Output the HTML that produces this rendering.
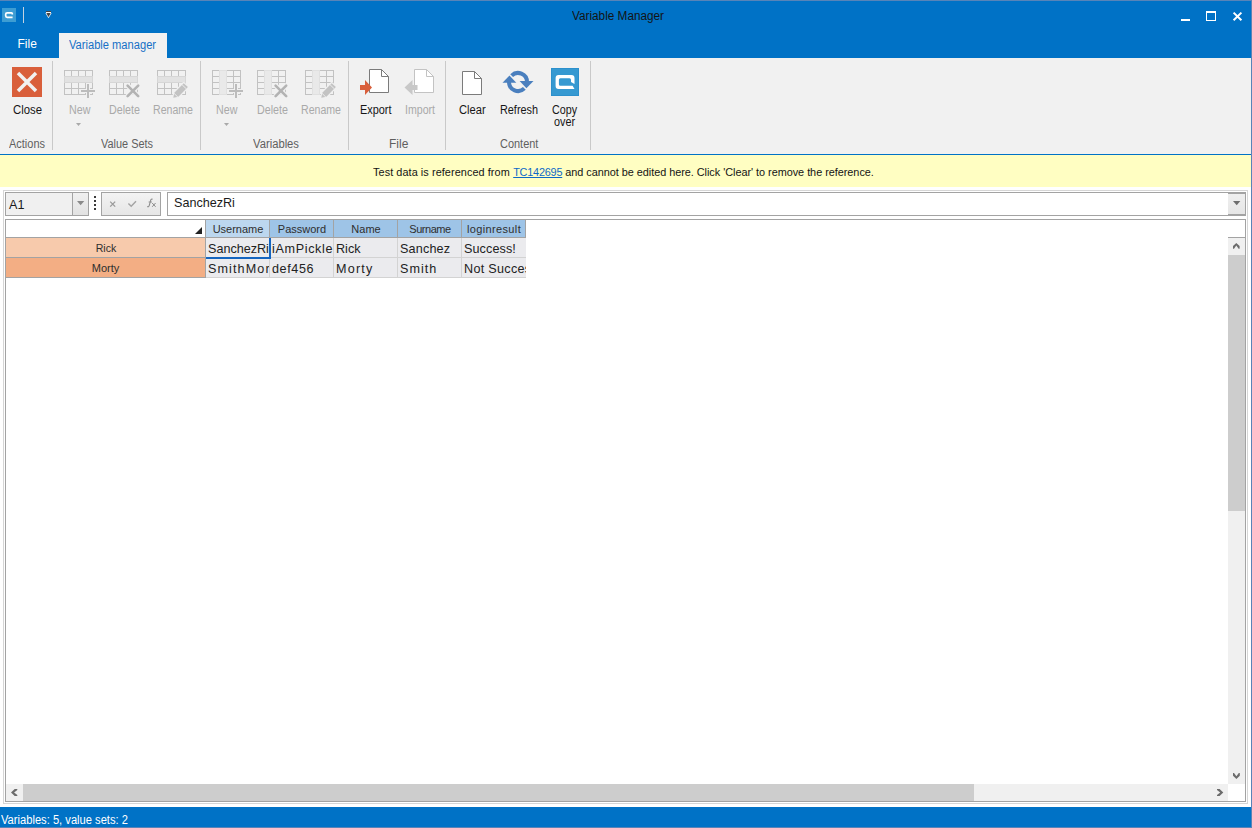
<!DOCTYPE html>
<html><head><meta charset="utf-8"><title>Variable Manager</title>
<style>
html,body{margin:0;padding:0;width:1252px;height:828px;overflow:hidden;background:#fff}
body{position:relative;font-family:"Liberation Sans", sans-serif}
div{box-sizing:content-box}
</style></head><body>
<div style="position:absolute;left:0px;top:0px;width:1252px;height:828px;background:#ffffff;"></div>
<div style="position:absolute;left:0px;top:0px;width:1252px;height:58px;background:#0072c6;"></div>
<div style="position:absolute;left:0px;top:0px;width:1252px;height:1px;background:#5884b8;"></div>
<svg style="position:absolute;left:2px;top:8px" width="14" height="14" viewBox="0 0 14 14"><rect width="14" height="14" fill="#3d9dd3"/><path d="M10.3 6.6 V5.6 Q10.3 4.8 9.5 4.8 H5.2 Q3.7 4.8 3.7 6.3 V7.8 Q3.7 9.3 5.2 9.3 H10.6" fill="none" stroke="#fff" stroke-width="1.7"/></svg>
<div style="position:absolute;left:23px;top:7px;width:1px;height:16px;background:#c3d2e0;"></div>
<svg style="position:absolute;left:44px;top:10px" width="9" height="10" viewBox="0 0 9 10"><rect x="2" y="1" width="5" height="1" fill="#444"/><rect x="2" y="2" width="5" height="1" fill="#f2f6fa"/><path d="M1.4 3 H7.6 L4.5 8.3 Z" fill="#f2f6fa"/><path d="M2.3 3 H6.7 L4.5 6.9 Z" fill="#444"/></svg>
<div style="position:absolute;left:572px;top:9.84px;font-size:12px;line-height:12px;color:#141414;white-space:pre;transform:scaleX(0.9808);transform-origin:0 0;">Variable Manager</div>
<div style="position:absolute;left:1181px;top:19px;width:9px;height:2px;background:#ffffff;"></div>
<div style="position:absolute;left:1206px;top:11px;width:8px;height:7px;border:1px solid #fff;border-top-width:2px"></div>
<svg style="position:absolute;left:1232px;top:11px" width="11" height="11" viewBox="0 0 11 11"><path d="M1.6 1.6 L9.4 9.3 M9.4 1.6 L1.6 9.3" stroke="#fff" stroke-width="2"/></svg>
<div style="position:absolute;left:17.5px;top:37.84px;font-size:12px;line-height:12px;color:#ffffff;white-space:pre;">File</div>
<div style="position:absolute;left:59px;top:33px;width:108px;height:25px;background:#f1f1f1;"></div>
<div style="position:absolute;left:69px;top:38.84px;font-size:12px;line-height:12px;color:#1570c6;white-space:pre;transform:scaleX(0.9275);transform-origin:0 0;">Variable manager</div>
<div style="position:absolute;left:0px;top:58px;width:1251px;height:96px;background:#f1f1f1;"></div>
<div style="position:absolute;left:0px;top:154px;width:1251px;height:1px;background:#0072c6;"></div>
<div style="position:absolute;left:52px;top:61px;width:1px;height:89px;background:#c9c9c9;"></div>
<div style="position:absolute;left:200px;top:61px;width:1px;height:89px;background:#c9c9c9;"></div>
<div style="position:absolute;left:348px;top:61px;width:1px;height:89px;background:#c9c9c9;"></div>
<div style="position:absolute;left:445px;top:61px;width:1px;height:89px;background:#c9c9c9;"></div>
<div style="position:absolute;left:590px;top:61px;width:1px;height:89px;background:#c9c9c9;"></div>
<svg style="position:absolute;left:12px;top:67px" width="30" height="30" viewBox="0 0 30 30"><rect width="30" height="30" fill="#d95f3b"/><path d="M6 6 L24 24 M24 6 L6 24" stroke="#f1f1f1" stroke-width="3.5"/></svg>
<div style="position:absolute;left:13px;top:103.84px;font-size:12px;line-height:12px;color:#161616;white-space:pre;transform:scaleX(0.9450);transform-origin:0 0;">Close</div>
<div style="position:absolute;left:9px;top:137.84px;font-size:12px;line-height:12px;color:#5f5f5f;white-space:pre;transform:scaleX(0.9150);transform-origin:0 0;">Actions</div>
<svg style="position:absolute;left:64px;top:70px" width="34" height="30" viewBox="0 0 34 30"><rect x="0" y="0" width="1" height="25" fill="#c2c2c2"/><rect x="7" y="0" width="1" height="6" fill="#c2c2c2"/><rect x="7" y="12" width="1" height="13" fill="#c2c2c2"/><rect x="14" y="0" width="1" height="6" fill="#c2c2c2"/><rect x="14" y="12" width="1" height="13" fill="#c2c2c2"/><rect x="21" y="0" width="1" height="6" fill="#c2c2c2"/><rect x="21" y="12" width="1" height="13" fill="#c2c2c2"/><rect x="28" y="0" width="1" height="25" fill="#c2c2c2"/><rect x="0" y="0" width="29" height="1" fill="#c2c2c2"/><rect x="0" y="6" width="29" height="1" fill="#c2c2c2"/><rect x="0" y="12" width="29" height="1" fill="#c2c2c2"/><rect x="0" y="18" width="29" height="1" fill="#c2c2c2"/><rect x="0" y="24" width="29" height="1" fill="#c2c2c2"/><rect x="0" y="6" width="29" height="7" fill="#d6d6d6"/><rect x="1" y="7" width="27" height="5" fill="#e2e2e2"/><rect x="22" y="13" width="4" height="16" fill="#f1f1f1"/><rect x="16" y="19" width="16" height="4" fill="#f1f1f1"/><rect x="23" y="14" width="2" height="14" fill="#bcbcbc"/><rect x="17" y="20" width="14" height="2" fill="#bcbcbc"/></svg>
<div style="position:absolute;left:68.5px;top:103.84px;font-size:12px;line-height:12px;color:#a9a9a9;white-space:pre;transform:scaleX(0.8917);transform-origin:0 0;">New</div>
<svg style="position:absolute;left:76px;top:123px" width="5" height="3" viewBox="0 0 5 3"><path d="M0 0 H5 L2.5 3 Z" fill="#a9a9a9"/></svg>
<svg style="position:absolute;left:109px;top:70px" width="34" height="30" viewBox="0 0 34 30"><rect x="0" y="0" width="1" height="25" fill="#c2c2c2"/><rect x="7" y="0" width="1" height="6" fill="#c2c2c2"/><rect x="7" y="12" width="1" height="13" fill="#c2c2c2"/><rect x="14" y="0" width="1" height="6" fill="#c2c2c2"/><rect x="14" y="12" width="1" height="13" fill="#c2c2c2"/><rect x="21" y="0" width="1" height="6" fill="#c2c2c2"/><rect x="21" y="12" width="1" height="13" fill="#c2c2c2"/><rect x="28" y="0" width="1" height="25" fill="#c2c2c2"/><rect x="0" y="0" width="29" height="1" fill="#c2c2c2"/><rect x="0" y="6" width="29" height="1" fill="#c2c2c2"/><rect x="0" y="12" width="29" height="1" fill="#c2c2c2"/><rect x="0" y="18" width="29" height="1" fill="#c2c2c2"/><rect x="0" y="24" width="29" height="1" fill="#c2c2c2"/><rect x="0" y="6" width="29" height="7" fill="#d6d6d6"/><rect x="1" y="7" width="27" height="5" fill="#e2e2e2"/><path d="M18.6 15.6 L29.2 26.2 M29.2 15.6 L18.6 26.2" stroke="#f1f1f1" stroke-width="5" stroke-linecap="round"/><path d="M18.6 15.6 L29.2 26.2 M29.2 15.6 L18.6 26.2" stroke="#b3b3b3" stroke-width="2.6" stroke-linecap="round"/></svg>
<div style="position:absolute;left:108.8px;top:103.84px;font-size:12px;line-height:12px;color:#a9a9a9;white-space:pre;transform:scaleX(0.8933);transform-origin:0 0;">Delete</div>
<svg style="position:absolute;left:157px;top:70px" width="34" height="30" viewBox="0 0 34 30"><rect x="0" y="0" width="1" height="25" fill="#c2c2c2"/><rect x="7" y="0" width="1" height="6" fill="#c2c2c2"/><rect x="7" y="12" width="1" height="13" fill="#c2c2c2"/><rect x="14" y="0" width="1" height="6" fill="#c2c2c2"/><rect x="14" y="12" width="1" height="13" fill="#c2c2c2"/><rect x="21" y="0" width="1" height="6" fill="#c2c2c2"/><rect x="21" y="12" width="1" height="13" fill="#c2c2c2"/><rect x="28" y="0" width="1" height="25" fill="#c2c2c2"/><rect x="0" y="0" width="29" height="1" fill="#c2c2c2"/><rect x="0" y="6" width="29" height="1" fill="#c2c2c2"/><rect x="0" y="12" width="29" height="1" fill="#c2c2c2"/><rect x="0" y="18" width="29" height="1" fill="#c2c2c2"/><rect x="0" y="24" width="29" height="1" fill="#c2c2c2"/><rect x="0" y="6" width="29" height="7" fill="#d6d6d6"/><rect x="1" y="7" width="27" height="5" fill="#e2e2e2"/><path d="M16.3 27.8 L17.3 22.8 L26.7 13.2 L30.9 17.1 L21.4 26.7 Z" fill="#f1f1f1" stroke="#f1f1f1" stroke-width="2.4" stroke-linejoin="round"/><path d="M16.3 27.8 L17.3 22.8 L26.7 13.2 L30.9 17.1 L21.4 26.7 Z" fill="#c3c3c3"/><path d="M17.0 23.3 L20.9 27.1 M25.1 14.8 L29.2 18.7" stroke="#f1f1f1" stroke-width="0.9"/></svg>
<div style="position:absolute;left:152.6px;top:103.84px;font-size:12px;line-height:12px;color:#a9a9a9;white-space:pre;transform:scaleX(0.8817);transform-origin:0 0;">Rename</div>
<div style="position:absolute;left:101px;top:137.84px;font-size:12px;line-height:12px;color:#5f5f5f;white-space:pre;transform:scaleX(0.9100);transform-origin:0 0;">Value Sets</div>
<svg style="position:absolute;left:212px;top:70px" width="34" height="30" viewBox="0 0 34 30"><rect x="0" y="0" width="1" height="25" fill="#c2c2c2"/><rect x="21" y="0" width="1" height="25" fill="#c2c2c2"/><rect x="28" y="0" width="1" height="25" fill="#c2c2c2"/><rect x="0" y="0" width="29" height="1" fill="#c2c2c2"/><rect x="0" y="6" width="7" height="1" fill="#c2c2c2"/><rect x="14" y="6" width="15" height="1" fill="#c2c2c2"/><rect x="0" y="12" width="7" height="1" fill="#c2c2c2"/><rect x="14" y="12" width="15" height="1" fill="#c2c2c2"/><rect x="0" y="18" width="7" height="1" fill="#c2c2c2"/><rect x="14" y="18" width="15" height="1" fill="#c2c2c2"/><rect x="0" y="24" width="29" height="1" fill="#c2c2c2"/><rect x="7" y="0" width="8" height="25" fill="#e0e0e0"/><rect x="8" y="1" width="6" height="23" fill="#e9e9e9"/><rect x="22" y="13" width="4" height="16" fill="#f1f1f1"/><rect x="16" y="19" width="16" height="4" fill="#f1f1f1"/><rect x="23" y="14" width="2" height="14" fill="#bcbcbc"/><rect x="17" y="20" width="14" height="2" fill="#bcbcbc"/></svg>
<div style="position:absolute;left:216.4px;top:103.84px;font-size:12px;line-height:12px;color:#a9a9a9;white-space:pre;transform:scaleX(0.8917);transform-origin:0 0;">New</div>
<svg style="position:absolute;left:224px;top:123px" width="5" height="3" viewBox="0 0 5 3"><path d="M0 0 H5 L2.5 3 Z" fill="#a9a9a9"/></svg>
<svg style="position:absolute;left:257px;top:70px" width="34" height="30" viewBox="0 0 34 30"><rect x="0" y="0" width="1" height="25" fill="#c2c2c2"/><rect x="21" y="0" width="1" height="25" fill="#c2c2c2"/><rect x="28" y="0" width="1" height="25" fill="#c2c2c2"/><rect x="0" y="0" width="29" height="1" fill="#c2c2c2"/><rect x="0" y="6" width="7" height="1" fill="#c2c2c2"/><rect x="14" y="6" width="15" height="1" fill="#c2c2c2"/><rect x="0" y="12" width="7" height="1" fill="#c2c2c2"/><rect x="14" y="12" width="15" height="1" fill="#c2c2c2"/><rect x="0" y="18" width="7" height="1" fill="#c2c2c2"/><rect x="14" y="18" width="15" height="1" fill="#c2c2c2"/><rect x="0" y="24" width="29" height="1" fill="#c2c2c2"/><rect x="7" y="0" width="8" height="25" fill="#e0e0e0"/><rect x="8" y="1" width="6" height="23" fill="#e9e9e9"/><path d="M18.6 15.6 L29.2 26.2 M29.2 15.6 L18.6 26.2" stroke="#f1f1f1" stroke-width="5" stroke-linecap="round"/><path d="M18.6 15.6 L29.2 26.2 M29.2 15.6 L18.6 26.2" stroke="#b3b3b3" stroke-width="2.6" stroke-linecap="round"/></svg>
<div style="position:absolute;left:256.6px;top:103.84px;font-size:12px;line-height:12px;color:#a9a9a9;white-space:pre;transform:scaleX(0.8933);transform-origin:0 0;">Delete</div>
<svg style="position:absolute;left:305px;top:70px" width="34" height="30" viewBox="0 0 34 30"><rect x="0" y="0" width="1" height="25" fill="#c2c2c2"/><rect x="21" y="0" width="1" height="25" fill="#c2c2c2"/><rect x="28" y="0" width="1" height="25" fill="#c2c2c2"/><rect x="0" y="0" width="29" height="1" fill="#c2c2c2"/><rect x="0" y="6" width="7" height="1" fill="#c2c2c2"/><rect x="14" y="6" width="15" height="1" fill="#c2c2c2"/><rect x="0" y="12" width="7" height="1" fill="#c2c2c2"/><rect x="14" y="12" width="15" height="1" fill="#c2c2c2"/><rect x="0" y="18" width="7" height="1" fill="#c2c2c2"/><rect x="14" y="18" width="15" height="1" fill="#c2c2c2"/><rect x="0" y="24" width="29" height="1" fill="#c2c2c2"/><rect x="7" y="0" width="8" height="25" fill="#e0e0e0"/><rect x="8" y="1" width="6" height="23" fill="#e9e9e9"/><path d="M16.3 27.8 L17.3 22.8 L26.7 13.2 L30.9 17.1 L21.4 26.7 Z" fill="#f1f1f1" stroke="#f1f1f1" stroke-width="2.4" stroke-linejoin="round"/><path d="M16.3 27.8 L17.3 22.8 L26.7 13.2 L30.9 17.1 L21.4 26.7 Z" fill="#c3c3c3"/><path d="M17.0 23.3 L20.9 27.1 M25.1 14.8 L29.2 18.7" stroke="#f1f1f1" stroke-width="0.9"/></svg>
<div style="position:absolute;left:300.5px;top:103.84px;font-size:12px;line-height:12px;color:#a9a9a9;white-space:pre;transform:scaleX(0.8817);transform-origin:0 0;">Rename</div>
<div style="position:absolute;left:253.2px;top:137.84px;font-size:12px;line-height:12px;color:#5f5f5f;white-space:pre;transform:scaleX(0.9358);transform-origin:0 0;">Variables</div>
<svg style="position:absolute;left:358px;top:68px" width="34" height="30" viewBox="0 0 34 30"><path d="M11.5 1.5 H23.5 L30.5 8.5 V24.5 H11.5 Z" fill="#fff" stroke="#7b7b7b" stroke-width="1"/><path d="M23.5 1.5 V8.5 H30.5" fill="none" stroke="#7b7b7b" stroke-width="1"/><path d="M2 17 H7 V12 L14 19.5 L7 27 V22 H2 Z" fill="#d95f3b"/></svg>
<div style="position:absolute;left:359.5px;top:103.84px;font-size:12px;line-height:12px;color:#161616;white-space:pre;transform:scaleX(0.9083);transform-origin:0 0;">Export</div>
<svg style="position:absolute;left:403px;top:68px" width="34" height="30" viewBox="0 0 34 30"><path d="M11.5 1.5 H23.5 L30.5 8.5 V24.5 H11.5 Z" fill="#fff" stroke="#c3c3c3" stroke-width="1"/><path d="M23.5 1.5 V8.5 H30.5" fill="none" stroke="#c3c3c3" stroke-width="1"/><path d="M1.5 19.5 L9.5 12 V17 H14.5 V22 H9.5 V27 Z" fill="#c8c8c8"/></svg>
<div style="position:absolute;left:404.8px;top:103.84px;font-size:12px;line-height:12px;color:#a9a9a9;white-space:pre;transform:scaleX(0.8825);transform-origin:0 0;">Import</div>
<div style="position:absolute;left:389px;top:137.84px;font-size:12px;line-height:12px;color:#5f5f5f;white-space:pre;">File</div>
<svg style="position:absolute;left:461px;top:70px" width="22" height="26" viewBox="0 0 22 26"><path d="M1.5 1.5 H13.5 L20.5 8.5 V24.5 H1.5 Z" fill="#fff" stroke="#7b7b7b" stroke-width="1"/><path d="M13.5 1.5 V8.5 H20.5" fill="none" stroke="#7b7b7b" stroke-width="1"/></svg>
<div style="position:absolute;left:459px;top:103.84px;font-size:12px;line-height:12px;color:#161616;white-space:pre;transform:scaleX(0.9275);transform-origin:0 0;">Clear</div>
<svg style="position:absolute;left:500px;top:66px" width="36" height="30" viewBox="0 0 36 30"><path d="M11.64 9.64 A9 9 0 0 1 27 16" fill="none" stroke="#4a7fbe" stroke-width="4"/><path d="M24.36 22.36 A9 9 0 0 1 9 16" fill="none" stroke="#4a7fbe" stroke-width="4"/><path d="M2.5 16.7 L16.3 16.7 L9.5 9.5 Z" fill="#4a7fbe"/><path d="M19.6 15 L33.5 15 L26.4 22.3 Z" fill="#4a7fbe"/></svg>
<div style="position:absolute;left:499.8px;top:103.84px;font-size:12px;line-height:12px;color:#161616;white-space:pre;transform:scaleX(0.9042);transform-origin:0 0;">Refresh</div>
<svg style="position:absolute;left:551px;top:68px" width="28" height="28" viewBox="0 0 28 28"><rect width="28" height="28" fill="#3699d1"/><rect x="0.5" y="0.5" width="27" height="27" fill="none" stroke="#2c90cc" stroke-width="1"/><path d="M20 14 V11.7 Q20 10.2 18.5 10.2 H9.4 Q7.9 10.2 7.9 11.7 V16.3 Q7.9 17.8 9.4 17.8 H21.6 L23.5 21 H7.6 Q4.6 21 4.6 18 V9.9 Q4.6 6.9 7.6 6.9 H20.5 Q23.5 6.9 23.5 9.9 V16 Z" fill="#fff"/></svg>
<div style="position:absolute;left:552px;top:103.84px;font-size:12px;line-height:12px;color:#161616;white-space:pre;transform:scaleX(0.8925);transform-origin:0 0;">Copy</div>
<div style="position:absolute;left:554px;top:115.84px;font-size:12px;line-height:12px;color:#161616;white-space:pre;transform:scaleX(0.9000);transform-origin:0 0;">over</div>
<div style="position:absolute;left:500px;top:137.84px;font-size:12px;line-height:12px;color:#5f5f5f;white-space:pre;transform:scaleX(0.9133);transform-origin:0 0;">Content</div>
<div style="position:absolute;left:0px;top:155px;width:1251px;height:32px;background:#fffec2;"></div>
<div style="position:absolute;left:373px;top:166.59px;font-size:11px;line-height:11px;color:#141414;white-space:pre;transform:scaleX(0.9882);transform-origin:0 0;"><span style="letter-spacing:0.075px">Test data is referenced from </span><span style="color:#0d68c8;text-decoration:underline;margin-left:0.3px;letter-spacing:-0.22px">TC142695</span><span style="letter-spacing:-0.03px"> and cannot be edited here. Click 'Clear' to remove the reference.</span></div>
<div style="position:absolute;left:3px;top:190px;width:1243px;height:612px;border:1px solid #d6d6d6"></div>
<div style="position:absolute;left:5px;top:192px;width:82px;height:22px;border:1px solid #a3a3a3;background:#f0f0f0"></div>
<div style="position:absolute;left:72px;top:193px;width:15px;height:22px;border-left:1px solid #a3a3a3;background:linear-gradient(#f0f0f0,#e2e2e2)"></div>
<svg style="position:absolute;left:76.9px;top:201px" width="8" height="5" viewBox="0 0 8 5"><path d="M0 0 H7.3 L3.65 4.2 Z" fill="#8a8a8a"/></svg>
<div style="position:absolute;left:9px;top:199.03px;font-size:12.6px;line-height:12.6px;color:#1a1a1a;white-space:pre;">A1</div>
<div style="position:absolute;left:94px;top:196px;width:2px;height:2px;background:#3a3a3a;"></div>
<div style="position:absolute;left:94px;top:200px;width:2px;height:2px;background:#3a3a3a;"></div>
<div style="position:absolute;left:94px;top:204px;width:2px;height:2px;background:#3a3a3a;"></div>
<div style="position:absolute;left:94px;top:208px;width:2px;height:2px;background:#3a3a3a;"></div>
<div style="position:absolute;left:101px;top:192px;width:58px;height:22px;border:1px solid #a3a3a3;background:linear-gradient(#f3f3f3,#e6e6e6)"></div>
<svg style="position:absolute;left:109px;top:200px" width="8" height="8" viewBox="0 0 8 8"><path d="M1.2 1.6 L6.2 6.6 M6.2 1.6 L1.2 6.6" stroke="#9a9a9a" stroke-width="1.3"/></svg>
<svg style="position:absolute;left:127px;top:200px" width="10" height="8" viewBox="0 0 10 8"><path d="M1.4 3.6 L4.2 6.3 L9 1.2" fill="none" stroke="#a3a3a3" stroke-width="1.4"/></svg>
<svg style="position:absolute;left:146px;top:198px" width="11" height="10" viewBox="0 0 11 10"><path d="M6.6 1.3 Q5.2 0.6 4.7 2.2 L3.2 7.6 Q2.7 9.2 1.2 8.6" fill="none" stroke="#8c8c8c" stroke-width="1.1"/><path d="M2.6 4 H6" stroke="#8c8c8c" stroke-width="0.9"/><path d="M6.2 5 L9.6 8.8 M9.6 5 L6.2 8.8" stroke="#8c8c8c" stroke-width="1"/></svg>
<div style="position:absolute;left:167px;top:192px;width:1077px;height:22px;border:1px solid #a3a3a3;background:#fff"></div>
<div style="position:absolute;left:1228px;top:193px;width:17px;height:20px;border-top:1px solid #a3a3a3;border-bottom:1px solid #a3a3a3;background:linear-gradient(#efefef,#e6e6e6)"></div>
<svg style="position:absolute;left:1232.8px;top:201px" width="8" height="5" viewBox="0 0 8 5"><path d="M0 0 H7.4 L3.7 4.2 Z" fill="#6e6e6e"/></svg>
<div style="position:absolute;left:174px;top:196.93px;font-size:12.6px;line-height:12.6px;color:#1a1a1a;white-space:pre;">SanchezRi</div>
<div style="position:absolute;left:5px;top:219px;width:1239px;height:581px;border:1px solid #a3a3a3;background:#fff"></div>
<svg style="position:absolute;left:195px;top:227px" width="8" height="8" viewBox="0 0 8 8"><path d="M7 0 V7 H0 Z" fill="#222"/></svg>
<div style="position:absolute;left:6px;top:237px;width:520px;height:1px;background:#a3a3a3;"></div>
<div style="position:absolute;left:6px;top:238px;width:199px;height:19px;background:#f7caac;"></div>
<div style="position:absolute;left:6px;top:258px;width:199px;height:19px;background:#f3ae84;"></div>
<div style="position:absolute;left:6px;top:257px;width:199px;height:1px;background:#a3a3a3;"></div>
<div style="position:absolute;left:6px;top:277px;width:199px;height:1px;background:#a3a3a3;"></div>
<div style="position:absolute;left:205px;top:220px;width:1px;height:58px;background:#a3a3a3;"></div>
<div style="position:absolute;left:6.5px;top:243.23px;font-size:10.6px;line-height:10.6px;color:#2e2e2e;white-space:pre;width:199px;text-align:center;">Rick</div>
<div style="position:absolute;left:6px;top:262.69px;font-size:11px;line-height:11px;color:#2e2e2e;white-space:pre;width:199px;text-align:center;">Morty</div>
<div style="position:absolute;left:206px;top:220px;width:63px;height:17px;background:#bcd7ef;"></div>
<div style="position:absolute;left:269px;top:220px;width:1px;height:17px;background:#a3a3a3;"></div>
<div style="position:absolute;left:206px;top:238px;width:63px;height:19px;background:#ebebee;"></div>
<div style="position:absolute;left:206px;top:258px;width:63px;height:19px;background:#ebebee;"></div>
<div style="position:absolute;left:269px;top:238px;width:1px;height:39px;background:#d3d3d3;"></div>
<div style="position:absolute;left:206px;top:257px;width:64px;height:1px;background:#d3d3d3;"></div>
<div style="position:absolute;left:206px;top:277px;width:64px;height:1px;background:#d3d3d3;"></div>
<div style="position:absolute;left:206.5px;top:223.69px;font-size:11px;line-height:11px;color:#2e2e2e;white-space:pre;letter-spacing:0px;width:63px;text-align:center;">Username</div>
<div style="position:absolute;left:206px;top:238px;width:63px;height:39px;overflow:hidden">
<div style="position:absolute;left:2.0px;top:4.93px;font-size:12.6px;line-height:12.6px;color:#222222;white-space:pre;letter-spacing:0px;">SanchezRi</div>
<div style="position:absolute;left:2.0px;top:24.73px;font-size:12.6px;line-height:12.6px;color:#222222;white-space:pre;letter-spacing:1.1px;">SmithMor</div>
</div>
<div style="position:absolute;left:270px;top:220px;width:63px;height:17px;background:#9ec4e7;"></div>
<div style="position:absolute;left:333px;top:220px;width:1px;height:17px;background:#a3a3a3;"></div>
<div style="position:absolute;left:270px;top:238px;width:63px;height:19px;background:#ebebee;"></div>
<div style="position:absolute;left:270px;top:258px;width:63px;height:19px;background:#ebebee;"></div>
<div style="position:absolute;left:333px;top:238px;width:1px;height:39px;background:#d3d3d3;"></div>
<div style="position:absolute;left:270px;top:257px;width:64px;height:1px;background:#d3d3d3;"></div>
<div style="position:absolute;left:270px;top:277px;width:64px;height:1px;background:#d3d3d3;"></div>
<div style="position:absolute;left:270.5px;top:223.69px;font-size:11px;line-height:11px;color:#2e2e2e;white-space:pre;letter-spacing:0px;width:63px;text-align:center;">Password</div>
<div style="position:absolute;left:270px;top:238px;width:63px;height:39px;overflow:hidden">
<div style="position:absolute;left:2.0px;top:4.93px;font-size:12.6px;line-height:12.6px;color:#222222;white-space:pre;letter-spacing:0.65px;">iAmPickle</div>
<div style="position:absolute;left:2.0px;top:24.73px;font-size:12.6px;line-height:12.6px;color:#222222;white-space:pre;letter-spacing:0.6px;">def456</div>
</div>
<div style="position:absolute;left:334px;top:220px;width:63px;height:17px;background:#9ec4e7;"></div>
<div style="position:absolute;left:397px;top:220px;width:1px;height:17px;background:#a3a3a3;"></div>
<div style="position:absolute;left:334px;top:238px;width:63px;height:19px;background:#ebebee;"></div>
<div style="position:absolute;left:334px;top:258px;width:63px;height:19px;background:#ebebee;"></div>
<div style="position:absolute;left:397px;top:238px;width:1px;height:39px;background:#d3d3d3;"></div>
<div style="position:absolute;left:334px;top:257px;width:64px;height:1px;background:#d3d3d3;"></div>
<div style="position:absolute;left:334px;top:277px;width:64px;height:1px;background:#d3d3d3;"></div>
<div style="position:absolute;left:334.5px;top:223.69px;font-size:11px;line-height:11px;color:#2e2e2e;white-space:pre;letter-spacing:0px;width:63px;text-align:center;">Name</div>
<div style="position:absolute;left:334px;top:238px;width:63px;height:39px;overflow:hidden">
<div style="position:absolute;left:2.0px;top:4.93px;font-size:12.6px;line-height:12.6px;color:#222222;white-space:pre;letter-spacing:0px;">Rick</div>
<div style="position:absolute;left:2.0px;top:24.73px;font-size:12.6px;line-height:12.6px;color:#222222;white-space:pre;letter-spacing:1.2px;">Morty</div>
</div>
<div style="position:absolute;left:398px;top:220px;width:63px;height:17px;background:#9ec4e7;"></div>
<div style="position:absolute;left:461px;top:220px;width:1px;height:17px;background:#a3a3a3;"></div>
<div style="position:absolute;left:398px;top:238px;width:63px;height:19px;background:#ebebee;"></div>
<div style="position:absolute;left:398px;top:258px;width:63px;height:19px;background:#ebebee;"></div>
<div style="position:absolute;left:461px;top:238px;width:1px;height:39px;background:#d3d3d3;"></div>
<div style="position:absolute;left:398px;top:257px;width:64px;height:1px;background:#d3d3d3;"></div>
<div style="position:absolute;left:398px;top:277px;width:64px;height:1px;background:#d3d3d3;"></div>
<div style="position:absolute;left:398.5px;top:223.69px;font-size:11px;line-height:11px;color:#2e2e2e;white-space:pre;letter-spacing:-0.45px;width:63px;text-align:center;">Surname</div>
<div style="position:absolute;left:398px;top:238px;width:63px;height:39px;overflow:hidden">
<div style="position:absolute;left:2.0px;top:4.93px;font-size:12.6px;line-height:12.6px;color:#222222;white-space:pre;letter-spacing:0.18px;">Sanchez</div>
<div style="position:absolute;left:2.0px;top:24.73px;font-size:12.6px;line-height:12.6px;color:#222222;white-space:pre;letter-spacing:1.0px;">Smith</div>
</div>
<div style="position:absolute;left:462px;top:220px;width:63px;height:17px;background:#9ec4e7;"></div>
<div style="position:absolute;left:525px;top:220px;width:1px;height:17px;background:#a3a3a3;"></div>
<div style="position:absolute;left:462px;top:238px;width:64px;height:19px;background:#ebebee;"></div>
<div style="position:absolute;left:462px;top:258px;width:64px;height:19px;background:#ebebee;"></div>
<div style="position:absolute;left:462px;top:257px;width:64px;height:1px;background:#d3d3d3;"></div>
<div style="position:absolute;left:462px;top:277px;width:64px;height:1px;background:#d3d3d3;"></div>
<div style="position:absolute;left:462.5px;top:223.69px;font-size:11px;line-height:11px;color:#2e2e2e;white-space:pre;letter-spacing:0.37px;width:63px;text-align:center;">loginresult</div>
<div style="position:absolute;left:462px;top:238px;width:64px;height:39px;overflow:hidden">
<div style="position:absolute;left:2.0px;top:4.93px;font-size:12.6px;line-height:12.6px;color:#222222;white-space:pre;letter-spacing:0.1px;">Success!</div>
<div style="position:absolute;left:2.0px;top:24.73px;font-size:12.6px;line-height:12.6px;color:#222222;white-space:pre;letter-spacing:0.3px;">Not Success</div>
</div>
<div style="position:absolute;left:6px;top:257px;width:199px;height:1px;background:#a3a3a3;"></div>
<div style="position:absolute;left:6px;top:277px;width:199px;height:1px;background:#a3a3a3;"></div>
<div style="position:absolute;left:206px;top:257px;width:65px;height:2px;background:#1465c0;"></div>
<div style="position:absolute;left:269px;top:238px;width:2px;height:21px;background:#1465c0;"></div>
<div style="position:absolute;left:1228px;top:237px;width:17px;height:1px;background:#a3a3a3;"></div>
<div style="position:absolute;left:1228px;top:238px;width:17px;height:546px;background:#f0f0f0;"></div>
<div style="position:absolute;left:1228px;top:255px;width:17px;height:256px;background:#cdcdcd;"></div>
<svg style="position:absolute;left:1233.2px;top:242.8px" width="7" height="6" viewBox="0 0 7 6"><path d="M0 5.8 L1 5.8 L3.3 2.6 L5.6 5.8 L6.6 5.8 L6.6 3.1 L3.3 0 L0 3.1 Z" fill="#6c6c6c"/></svg>
<svg style="position:absolute;left:1233.1px;top:772.9px" width="7" height="6" viewBox="0 0 7 6"><path d="M0 0 L1 0 L3.4 3.3 L5.8 0 L6.8 0 L6.8 2.7 L3.4 5.9 L0 2.7 Z" fill="#6c6c6c"/></svg>
<div style="position:absolute;left:6px;top:784px;width:1222px;height:17px;background:#f0f0f0;"></div>
<div style="position:absolute;left:23px;top:784px;width:951px;height:17px;background:#cdcdcd;"></div>
<svg style="position:absolute;left:10.9px;top:789px" width="7" height="7" viewBox="0 0 7 7"><path d="M6.3 0 L3.7 0 L0 3.5 L3.7 7 L6.3 7 L6.3 6 L3.1 3.5 L6.3 1 Z" fill="#6c6c6c"/></svg>
<svg style="position:absolute;left:1216.9px;top:789px" width="7" height="7" viewBox="0 0 7 7"><path d="M0 0 L2.6 0 L6.3 3.5 L2.6 7 L0 7 L0 6 L3.2 3.5 L0 1 Z" fill="#6c6c6c"/></svg>
<div style="position:absolute;left:0px;top:807px;width:1252px;height:21px;background:#0072c6;"></div>
<div style="position:absolute;left:0px;top:827px;width:1252px;height:1px;background:#5884b8;"></div>
<div style="position:absolute;left:1px;top:813.84px;font-size:12px;line-height:12px;color:#ffffff;white-space:pre;transform:scaleX(0.9300);transform-origin:0 0;">Variables: 5, value sets: 2</div>
<div style="position:absolute;left:1251px;top:0px;width:1px;height:828px;background:#5884b8;"></div>
</body></html>
